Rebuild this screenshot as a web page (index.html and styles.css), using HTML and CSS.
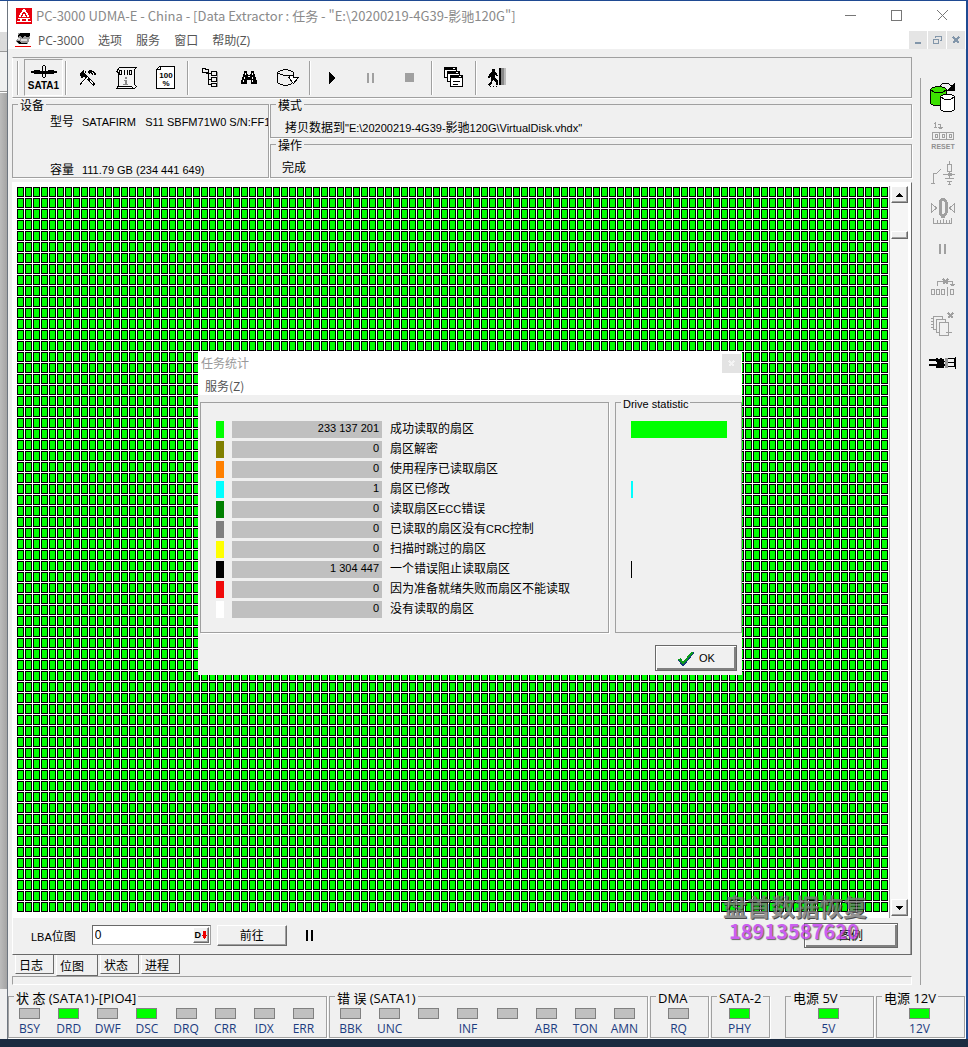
FILE: index.html
```html
<!DOCTYPE html>
<html lang="zh-CN">
<head>
<meta charset="utf-8">
<title>PC-3000 UDMA-E - China</title>
<link rel="stylesheet" href="styles.css">
</head>

<body>
<div class="desktop">
	<div class="behind">
		<div class="behind-title"></div>
		<div class="behind-menu"></div>
		<div class="behind-tool"></div>
		<div class="behind-body"></div>
		<div class="behind-foot"></div>
	</div>

	<div class="window">
		<!--标题栏-->
		<div class="titlebar">
			<svg class="logo" width="16" height="16" viewBox="0 0 16 16"><path fill="#e8000d" d="M0 0h16v16H0z"/><path fill="#fff" d="M7 1h2v1h1v2h1v1h1v2h1v2h-2V7h-1V5H9V4H7v1H6v2H5v2H3V7h1V5h1V4h1V2h1zM7 6h2v2h1v1H6V8h1zM2 10h12v1H2zM4 11h2v2H4zM10 11h2v2h-2zM1 13h14v1H1z"/></svg>
			<span class="title">PC-3000 UDMA-E - China - [Data Extractor : 任务 - "E:\20200219-4G39-影驰120G"]</span>
			<button class="win-btn" aria-label="最小化"><svg width="12" height="12"><path d="M0 5.500h11"/></svg></button>
			<button class="win-btn" aria-label="最大化"><svg width="12" height="12"><path d="M.5.5h10v10H.5z"/></svg></button>
			<button class="win-btn" aria-label="关闭"><svg width="12" height="12"><path d="M.5.5l10 10M10.500.5l-10 10"/></svg></button>
		</div>

		<!--菜单-->
		<div class="menubar">
			<svg class="menu-icon" width="16" height="16" viewBox="0 0 16 16"><path fill="#999" d="M3 1h12v5l-2 6H3L1 9l2-3z"/><path d="M5 1h10v3l-3 1-2-1-3 2-2-2-2 1V3zM2 9h2l3 2h5v1H4z"/><path fill="#ddd" d="M6 7h6v2H6zM3 6h2v2H3z"/><path fill="#e00" d="M0 14h16v1H0z"/></svg>
			<a href="#">PC-3000</a>
			<a href="#">选项</a>
			<a href="#">服务</a>
			<a href="#">窗口</a>
			<a href="#">帮助(Z)</a>
			<div class="mdi">
				<button aria-label="最小化子窗口"><svg width="10" height="10"><path fill="#8296aa" d="M2 7h6v2H2z"/></svg></button>
				<button aria-label="还原子窗口"><svg width="10" height="10"><path fill="none" stroke="#8296aa" d="M3 3V1.500h6.500v4H8M1.500 4.500h5v4h-5zM1 4h6M3 1h7"/></svg></button>
				<button aria-label="关闭子窗口"><svg width="10" height="10"><path fill="none" stroke="#8296aa" stroke-width="2" d="M2 2l6 6M8 2 2 8"/></svg></button>
			</div>
		</div>

		<div class="body">
			<div class="main">
				<!--工具栏-->
				<div class="toolbar">
					<i class="grip"></i>
					<button class="tool sata">
						<svg width="26" height="13" viewBox="0 0 26 13"><path d="M0 6h26v2H0zM3 5h6v4H3zM17 5h6v4h-6zM9 6h8v3H9z"/><path d="M11 1h1v11h-1zM14 1h1v11h-1zM12 0h2v1h-2zM12 12h2v1h-2z"/></svg>
						<b>SATA1</b>
					</button>
					<i class="sep"></i>
					<button class="tool" aria-label="工具"><svg width="18" height="18" viewBox="0 0 18 18"><path d="M9 2l2-1 3 1 3 3-1 2-2-2-1 1-2-2-9 12-2-1L10 5z"/><path d="M1 4l3-3 4 2-2 1 1 2 9 9-2 2-9-9-3 1z"/><path fill="#fff" d="M4 3l1-1 1 1-1 1zM8 8l1 1-5 6-1-1zM11 11l3 3-1 1-3-3zM13 3l2 1-1 1z"/></svg></button>
					<button class="tool" aria-label="脚本"><svg width="24" height="24" viewBox="0 0 24 24"><path fill="#f4f4f4" stroke="#000" d="M4.500 1.500h17l-2 2v15l2 2-2 2H1.500l2-3V6.500l-2-1z"/><path fill="none" stroke="#000" d="M4.500 4.500h2v4h-2zM9.500 4v5M12.500 4v5M14.500 4.500h2v4h-2zM2 20.500h14l2 1"/><path fill="#888" d="M10 11h2v2h-2zM9 14h3v4h1v1H8v-1h2v-3H9z"/></svg></button>
					<button class="tool" aria-label="百分比"><svg width="20" height="24" viewBox="0 0 20 24"><path fill="#fff" stroke="#000" d="M3.500.5h15v22H.5v-19z"/><path d="M1 3h3V0h1v4H1z"/><text x="10" y="12" font-size="8">100</text><text x="10" y="20" font-size="8">%</text></svg></button>
					<i class="sep"></i>
					<button class="tool" aria-label="目录树"><svg width="18" height="20" viewBox="0 0 18 20"><path fill="none" stroke="#000" d="M1.500 2V.5h3v1h3v3h-6zM5 5.500h5M7.500 5v11.500h3M7.500 11.500h3M10.500 3.500h5v4h-5zM10.500 9.500h5v4h-5zM10.500 15.500h5v3h-5z"/><path fill="#999" d="M16 4h1v15h-1z"/></svg></button>
					<button class="tool" aria-label="查找"><svg width="18" height="16" viewBox="0 0 18 16"><path d="M4 1h3v3h1v1h2V4h1V1h3v3h1v3h1v3h1v4h-6v-4H7v4H1v-4h1V7h1V4h1z"/><path fill="#fff" d="M5 3h1v2H5zM4 7h1v2H4zM3 10h1v2H3zM12 3h1v2h-1zM12 7h1v2h-1zM12 10h1v2h-1zM8 6h2v1H8z"/></svg></button>
					<button class="tool" aria-label="磁盘"><svg width="24" height="18" viewBox="0 0 24 18"><path fill="none" stroke="#000" d="M17.500 6V3.500l-3-2-5-1-5 1-3 2v10l3 2 5 1 5-1 2-2M1.500 3.500l3 2 5 1h4"/><path fill="#fff" stroke="#000" d="M13.500 6.500h4v2h5l-5 6-5-6h1z"/></svg></button>
					<i class="sep"></i>
					<button class="tool" aria-label="开始"><svg width="8" height="12"><path d="M1 0l6 6-6 6z"/></svg></button>
					<button class="tool" aria-label="暂停"><svg width="8" height="12"><path fill="#a0a0a0" d="M0 1h2v10H0zM5 1h2v10H5z"/></svg></button>
					<button class="tool" aria-label="停止"><svg width="10" height="10"><path fill="#a0a0a0" d="M0 0h9v9H0z"/></svg></button>
					<i class="sep"></i>
					<button class="tool" aria-label="窗口列表"><svg width="20" height="22" viewBox="0 0 20 22"><g fill="#fff" stroke="#000"><path d="M.5 1.500h12v9H.5z"/><path d="M3.500 5.500h12v9h-12z"/><path d="M6.500 9.500h12v10h-12z"/></g><path d="M0 0h13v3H0zM3 4h13v3H3zM6 8h13v3H6zM9 14h7v1H9zM9 17h5v1H9z"/><path fill="#fff" d="M9 1h2v1H9zM12 5h2v1h-2zM15 9h2v1h-2z"/></svg></button>
					<i class="sep"></i>
					<button class="tool" aria-label="退出"><svg width="20" height="20" viewBox="0 0 20 20"><path d="M4 1h3v3h1l2 4H8L7 7v3l3 3v4H8v-3l-3-2-1 3-2 3-2-1 3-4V8L2 10H0l1-4 3-2zM2 18h1v1H2zM5 18h1v1H5zM8 18h1v1H8z"/><path d="M11 0h2v17h-2z"/><path fill="#888" d="M13 0h3v17h-3z"/><path fill="#bbb" d="M16 0h2v17h-2z"/></svg></button>
				</div>

				<!--任务信息-->
				<div class="info">
					<fieldset class="group device">
						<legend>设备</legend>
						<dl>
							<dt>型号</dt>
							<dd>SATAFIRM &nbsp; S11 SBFM71W0 S/N:FF1</dd>
							<dt>容量</dt>
							<dd>111.79 GB (234 441 649)</dd>
						</dl>
					</fieldset>
					<div class="info-right">
						<fieldset class="group">
							<legend>模式</legend>
							<p class="mode">拷贝数据到<span class="en">"E:\20200219-4G39-</span>影驰<span class="en">120G\VirtualDisk.vhdx"</span></p>
						</fieldset>
						<fieldset class="group">
							<legend>操作</legend>
							<p class="action">完成</p>
						</fieldset>
					</div>
				</div>

				<!--位图-->
				<div class="panel">
					<div class="view">
						<div class="sectors"></div>
						<div class="scrollbar">
							<button class="raised" aria-label="向上"><svg width="8" height="4"><path d="M3 0h1v1h1v1h1v1h1v1H0V3h1V2h1V1h1z"/></svg></button>
							<div class="thumb raised"></div>
							<button class="raised down" aria-label="向下"><svg width="8" height="4"><path d="M0 0h7v1H6v1H5v1H4v1H3V3H2V2H1V1H0z"/></svg></button>
						</div>
					</div>
					<div class="lba">
						<label for="lba"><span class="en">LBA</span>位图</label>
						<div class="lba-box">
							<input type="text" id="lba" value="0">
							<button class="raised" aria-label="十进制"><b>D</b><svg width="5" height="8"><path fill="#e00" d="M1 0h3v4h1v1H4v2H3v1H2V7H1V5H0V4h1z"/></svg></button>
						</div>
						<button class="raised go">前往</button>
						<svg class="hold" width="7" height="11"><path d="M0 0h2v11H0zM5 0h2v11H5z"/></svg>
						<button class="raised default legend-btn">图例</button>
					</div>
					<div class="watermark">
						<p class="wm-name">盘首数据恢复</p>
						<p class="wm-tel">18913587620</p>
					</div>
				</div>

				<div class="tabs">
					<button>日志</button>
					<button class="current">位图</button>
					<button>状态</button>
					<button>进程</button>
				</div>
				<div class="progress"></div>

				<!--任务统计对话框-->
				<div class="dialog">
					<div class="dialog-title">任务统计<button aria-label="关闭"><svg width="7" height="7"><path stroke="#f4f4f4" stroke-width="2" d="M1 1l5 5M6 1 1 6"/></svg></button></div>
					<div class="dialog-menu"><a href="#">服务(Z)</a></div>
					<div class="dialog-body">
						<div class="stats">
							<table>
								<tr><td class="lime"></td><td class="num">233 137 201</td><td>成功读取的扇区</td></tr>
								<tr><td class="olive"></td><td class="num">0</td><td>扇区解密</td></tr>
								<tr><td class="orange"></td><td class="num">0</td><td>使用程序已读取扇区</td></tr>
								<tr><td class="cyan"></td><td class="num">1</td><td>扇区已修改</td></tr>
								<tr><td class="green"></td><td class="num">0</td><td>读取扇区<span class="en">ECC</span>错误</td></tr>
								<tr><td class="gray"></td><td class="num">0</td><td>已读取的扇区没有<span class="en">CRC</span>控制</td></tr>
								<tr><td class="yellow"></td><td class="num">0</td><td>扫描时跳过的扇区</td></tr>
								<tr><td class="black"></td><td class="num">1 304 447</td><td>一个错误阻止读取扇区</td></tr>
								<tr><td class="red"></td><td class="num">0</td><td>因为准备就绪失败而扇区不能读取</td></tr>
								<tr><td class="white"></td><td class="num">0</td><td>没有读取的扇区</td></tr>
							</table>
						</div>
						<fieldset class="group drive">
							<legend>Drive statistic</legend>
							<ul>
								<li class="lime" style="width:96px"></li>
								<li></li>
								<li></li>
								<li class="cyan" style="width:2px"></li>
								<li></li>
								<li></li>
								<li></li>
								<li class="black" style="width:1px"></li>
								<li></li>
								<li></li>
							</ul>
						</fieldset>
					</div>
					<div class="dialog-foot">
						<button class="raised default ok"><svg width="18" height="15" viewBox="0 0 18 15"><path fill="#123a7a" d="M1 9l3-1 2 3 9-10h2v1L7 15H5z"/><path fill="#0a9a1a" d="M1 8l3-1 2 4 9-11 1 2L6 14z"/></svg>OK</button>
					</div>
				</div>
			</div>

			<!--右侧工具-->
			<div class="side">
				<button aria-label="复制数据"><svg width="28" height="30" viewBox="0 0 28 30"><path fill="#3ce000" stroke="#000" d="M1.500 7.500l2-2 6-1 6 1 2 2v14l-3 2h-10l-3-2z"/><path fill="none" stroke="#000" d="M2 8l3 2h9l3-2M11 3.500l3-2h5l3 2 2 2"/><path d="M26 0v9h-8z"/><path fill="#fff" stroke="#000" d="M11.500 14.500l3-2h8l3 2v13l-3 2h-8l-3-2z"/><path fill="none" stroke="#000" d="M12 15l3 2h7l3-2"/></svg></button>
				<button class="off" aria-label="复位"><svg width="24" height="28" viewBox="0 0 24 28"><path d="M3 2.500h2M4.500 1v5M3 6.500h3M9.500 3v5M7 3.500h3M7 6.500h5M8 7.500h3M1.500 11.500h21v7h-21zM8.500 12v7M15.500 12v7M4 13.500h2v3H4zM11 13.500h2v3h-2zM18 13.500h2v3h-2z"/><text x="12" y="28" font-size="7">RESET</text></svg></button>
				<button class="off" aria-label="电源"><svg width="24" height="26" viewBox="0 0 24 26"><path d="M0 23.500h4M2.500 23V13.500h3M6 13l4-4M18.500 1v3M16.500 4.500h4v7h-4zM18.500 12v6M12 14.500h12M17 13.500h3v2h-3M14 18.500h9M16 21.500h5M18.500 22v3M17 24.500h3"/></svg></button>
				<button class="off" aria-label="归零"><svg width="26" height="28" viewBox="0 0 26 28"><path d="M1.500 6.500v9l5-4.500zM24.500 6.500v9L19.500 11zM3.500 21v5h18v-5M7.500 23v3M10.500 23v3M13.500 22v4M16.500 23v3M19.500 23v3"/><path stroke-width="3" d="M10 5l2-3h2l2 3v11l-2 3h-2l-2-3z"/></svg></button>
				<button class="off" aria-label="暂停"><svg width="8" height="12"><path stroke-width="2" d="M1 1v10M6 1v10"/></svg></button>
				<button class="off" aria-label="跳过"><svg width="26" height="20" viewBox="0 0 26 20"><path d="M1.500 12.500h3v5h-3zM6.500 12.500h3v5h-3zM11.500 12.500h3v5h-3zM20.500 12.500h3v5h-3zM17.500 10v9M7.500 9V4.500h15V8M20 7.500h5M21 8.500h3"/><path stroke-width="2" d="M13 2l5 5M18 2l-5 5"/></svg></button>
				<button class="off" aria-label="副本"><svg width="26" height="26" viewBox="0 0 26 26"><path d="M3.500 4.500h9v13h-9zM1 6.500h2M1 9.500h2M1 12.500h2M1 15.500h2"/><path fill="#f0f0f0" d="M6.500 7.500h9v13h-9z"/><path fill="#f0f0f0" d="M9.500 10.500h9v13h-9z"/><path d="M16 20.500h6M18 19.500v3"/><path stroke-width="2" d="M18 1l5 5M23 1l-5 5"/></svg></button>
				<button aria-label="连接"><svg width="28" height="14" viewBox="0 0 28 14"><path d="M0 3h7V2h2v1h2V2h2v1h2v2h1v1h-1v2h4v2h-4v2H7v-2H0V8h8V6H7V5H0z"/><path fill="#999" d="M16 2h3v10h-3z"/><path d="M19 2h7V1h1v12h-1v-2h-7v-1h6V7h-6V6h6V3h-6z"/></svg></button>
			</div>
		</div>

		<!--状态指示灯-->
		<div class="status">
			<fieldset class="group">
				<legend>状 态 (SATA1)-[PIO4]</legend>
				<ul>
					<li><i></i>BSY</li>
					<li><i class="on"></i>DRD</li>
					<li><i></i>DWF</li>
					<li><i class="on"></i>DSC</li>
					<li><i></i>DRQ</li>
					<li><i></i>CRR</li>
					<li><i></i>IDX</li>
					<li><i></i>ERR</li>
				</ul>
			</fieldset>
			<fieldset class="group">
				<legend>错 误 (SATA1)</legend>
				<ul>
					<li><i></i>BBK</li>
					<li><i></i>UNC</li>
					<li><i></i></li>
					<li><i></i>INF</li>
					<li><i></i></li>
					<li><i></i>ABR</li>
					<li><i></i>TON</li>
					<li><i></i>AMN</li>
				</ul>
			</fieldset>
			<fieldset class="group">
				<legend>DMA</legend>
				<ul><li><i></i>RQ</li></ul>
			</fieldset>
			<fieldset class="group">
				<legend>SATA-2</legend>
				<ul><li><i class="on"></i>PHY</li></ul>
			</fieldset>
			<fieldset class="group power">
				<legend>电源 5V</legend>
				<ul><li><i class="on"></i>5V</li></ul>
			</fieldset>
			<fieldset class="group">
				<legend>电源 12V</legend>
				<ul><li><i class="on"></i>12V</li></ul>
			</fieldset>
		</div>
	</div>
</div>
</body>
</html>
```
FILE: styles.css
```css
* {
	box-sizing:border-box;
}
body {
	margin:0;
	background:#1b2b40;
	font-family:"Liberation Sans", "Noto Sans CJK SC", sans-serif;
	font-size:12px;
	color:#000;
}
ul, dl, dd, p {
	list-style:none;
	margin:0;
	padding:0;
}
a {
	color:inherit;
	text-decoration:none;
}
button {
	margin:0;
	padding:0;
	border:0;
	background:none;
	font:inherit;
	color:inherit;
	display:flex;
	align-items:center;
	justify-content:center;
}
svg {
	display:block;
	flex:none;
	shape-rendering:crispEdges;
}
svg text {
	font-weight:bold;
	text-anchor:middle;
}
.en {
	font-size:11px;
}
.desktop {
	display:flex;
	padding:1px 2px 0 0;
	background:#1f4a92;
	border-bottom:8px solid #1b2b40;
}

/* 后面的窗口 */
.behind {
	width:7px;
	display:flex;
	flex-direction:column;
}
.behind-title {
	height:31px;
	background:#fff;
}
.behind-menu {
	height:20px;
	background:#dcdcdc;
	border-bottom:1px solid #999;
}
.behind-tool {
	height:40px;
	background:#f0f0f0;
	border-bottom:1px solid #999;
}
.behind-body {
	flex:1;
	background:linear-gradient(90deg, #bcbcbc, #a4a4a4);
	border-top:1px solid #fff;
}
.behind-foot {
	height:50px;
	background:#f0f0f0;
}

/* 主窗口 */
.window {
	flex:1;
	min-width:0;
	background:#f0f0f0;
	border-left:1px solid #6e7680;
}
.titlebar {
	height:30px;
	padding-left:8px;
	display:flex;
	align-items:center;
	background:#fff;
	color:#8a8a8a;
	font-family:"Noto Sans CJK SC", sans-serif;
	font-size:13px;
}
.title {
	flex:1;
	margin-left:4px;
	padding-bottom:2px;
	white-space:nowrap;
	overflow:hidden;
}
.win-btn {
	width:46px;
	height:30px;
}
.win-btn path {
	fill:none;
	stroke:#777;
}
.menubar {
	height:18px;
	padding-left:7px;
	display:flex;
	align-items:center;
	background:#fff;
	color:#555;
	font-family:"Open Sans", "Noto Sans CJK SC", sans-serif;
}
.menubar a {
	margin-right:14px;
	line-height:18px;
	padding-top:1px;
}
.menu-icon {
	margin-right:7px;
}
.mdi {
	display:flex;
	gap:1px;
	margin-left:auto;
	margin-right:1px;
}
.mdi button {
	width:18px;
	height:18px;
	background:#e5e5e5;
}
.body {
	display:flex;
}
.main {
	flex:1;
	min-width:0;
	position:relative;
	padding:8px 0 0 4px;
}

/* 工具栏 */
.toolbar {
	height:41px;
	display:flex;
	align-items:center;
	border:1px solid #a0a0a0;
	border-left-color:#fff;
	box-shadow:0 1px 0 #fff;
}
.grip {
	width:2px;
	height:34px;
	margin:0 5px 0 4px;
	background:#a0a0a0;
	border-right:1px solid #fff;
}
.sep {
	width:2px;
	height:34px;
	margin:0 1px 0 2px;
	background:#a0a0a0;
	border-right:1px solid #fff;
}
.tool {
	width:39px;
	height:37px;
}
.sata {
	flex-direction:column;
	gap:3px;
	border:1px solid #fff;
	border-top-color:#a0a0a0;
	border-left-color:#a0a0a0;
	font-size:10px;
	line-height:10px;
}

/* 分组框 */
.group {
	min-width:0;
	margin:0;
	padding:0;
	border:1px solid #a0a0a0;
	box-shadow:1px 1px 0 #fff;
}
.group legend {
	margin-left:5px;
	padding:4px 2px 0;
	height:17px;
	line-height:13px;
	white-space:nowrap;
}
.info {
	display:flex;
	gap:1px;
	margin-top:-2px;
}
.device {
	width:257px;
	overflow:hidden;
}
.device dl {
	display:grid;
	grid-template-columns:24px 1fr;
	column-gap:8px;
	row-gap:30px;
	height:64px;
	padding-left:37px;
	line-height:18px;
}
.device dd {
	font-size:11px;
	white-space:nowrap;
}
.info-right {
	flex:1;
	min-width:0;
}
.info-right .group {
	height:42px;
}
.info-right .group + .group {
	margin-top:-2px;
}
.info-right p {
	padding-top:7px;
	line-height:16px;
}
.info-right .mode {
	padding-left:14px;
}
.info-right .action {
	padding-left:11px;
}

/* 位图面板 */
.panel {
	position:relative;
	margin-top:4px;
	border:1px solid #fff;
	border-right-color:#696969;
	border-bottom-color:#696969;
}
.view {
	display:flex;
	padding:4px 3px 5px 4px;
	background:#fff;
}
.sectors {
	flex:1;
	height:726px;
	background:
		repeating-linear-gradient(90deg, transparent 0 7px, #fff 7px 8px),
		repeating-linear-gradient(180deg, transparent 0 10px, #fff 10px 11px),
		repeating-linear-gradient(90deg, #000 0 1px, transparent 1px 6px, #000 6px 8px),
		repeating-linear-gradient(180deg, #000 0 1px, transparent 1px 9px, #000 9px 11px),
		#0f0;
}
.scrollbar {
	width:19px;
	display:flex;
	flex-direction:column;
	margin:-1px 0 -5px 0;
	padding:0 0 2px 1px;
	border-left:1px solid #a0a0a0;
	background:#f5f5f5;
}
.raised {
	background:#f0f0f0;
	border:1px solid #fff;
	border-right-color:#696969;
	border-bottom-color:#696969;
	box-shadow:inset -1px -1px 0 #a0a0a0;
}
.scrollbar button {
	height:17px;
}
.thumb {
	height:8px;
	margin-top:28px;
}
.scrollbar .down {
	margin-top:auto;
}
.lba {
	display:flex;
	align-items:center;
	height:36px;
	padding:0 12px 2px 18px;
	border-right:1px solid #a0a0a0;
}
.lba-box {
	display:flex;
	width:119px;
	height:20px;
	margin:0 6px 0 16px;
	padding:1px;
	background:#fff;
	border:1px solid #a0a0a0;
	border-top-color:#696969;
	border-left-color:#696969;
}
.lba-box input {
	flex:1;
	min-width:0;
	padding:0 1px;
	border:0;
	outline:0;
	background:none;
	font:12px "Liberation Sans", sans-serif;
}
.lba-box button {
	width:16px;
	gap:1px;
	font-size:9px;
}
.go {
	width:70px;
	height:21px;
}
.go, .legend-btn {
	padding-bottom:2px;
}
.hold {
	margin-left:19px;
}
.default {
	border-color:#696969;
	box-shadow:inset 1px 1px 0 #fff, inset -2px -2px 0 #808080;
}
.legend-btn {
	width:94px;
	height:25px;
	margin-left:auto;
}
.watermark {
	position:absolute;
	right:44px;
	bottom:12px;
	opacity:.8;
	font-family:"Noto Sans CJK SC", sans-serif;
	font-weight:bold;
}
.wm-name {
	color:#777;
	font-size:24px;
	line-height:28px;
	text-shadow:1px 1px 0 #222;
}
.wm-tel {
	padding-left:6px;
	color:#c33cf0;
	font-size:20px;
	line-height:22px;
	text-shadow:1px 1px 1px #444;
}

/* 页签 */
.tabs {
	display:flex;
	align-items:flex-start;
	gap:2px;
	padding-left:3px;
	height:21px;
}
.tabs button {
	width:39px;
	height:19px;
	padding-left:3px;
	justify-content:flex-start;
	border:1px solid #696969;
	border-top:0;
	border-left-color:#fff;
}
.tabs .current {
	width:42px;
	height:21px;
}
.progress {
	height:9px;
	border:1px solid #fff;
	border-top-color:#a0a0a0;
	border-left-color:#a0a0a0;
}

/* 对话框 */
.dialog {
	position:absolute;
	left:190px;
	top:302px;
	width:544px;
	background:#f0f0f0;
}
.dialog-title {
	display:flex;
	justify-content:space-between;
	height:22px;
	padding:3px 1px 0 3px;
	background:#fff;
	color:#999;
	font-family:"Noto Sans CJK SC", sans-serif;
	line-height:18px;
}
.dialog-title button {
	width:19px;
	height:19px;
	background:#e3e3e3;
}
.dialog-menu {
	height:22px;
	padding-left:7px;
	background:#fff;
	color:#555;
	font-family:"Noto Sans CJK SC", sans-serif;
	line-height:26px;
}
.dialog-body {
	display:flex;
	gap:6px;
	padding-left:2px;
}
.stats {
	width:409px;
	margin-top:7px;
	padding:15px 0 11px 7px;
	border:1px solid #a0a0a0;
	box-shadow:1px 1px 0 #fff;
}
.stats table {
	border-spacing:8px 3px;
}
.stats td {
	height:17px;
	padding:0;
	line-height:17px;
	vertical-align:top;
	white-space:nowrap;
}
.stats td:first-child {
	width:8px;
}
.stats .num {
	width:150px;
	padding-right:3px;
	background:#c0c0c0;
	font-size:11px;
	line-height:15px;
	text-align:right;
}
.lime { background:#0f0; }
.olive { background:#808000; }
.orange { background:#ff8000; }
.cyan { background:#0ff; }
.green { background:#008000; }
.gray { background:#808080; }
.yellow { background:#ff0; }
.black { background:#000; }
.red { background:#f00a0a; }
.white { background:#fff; }
.drive {
	flex:1;
	margin-top:-1px;
	box-shadow:none;
}
.drive legend {
	font-size:11px;
}
.drive ul {
	padding:10px 0 0 15px;
}
.drive li {
	height:17px;
	margin-bottom:3px;
}
.dialog-foot {
	display:flex;
	justify-content:flex-end;
	padding:12px 5px 4px 0;
}
.ok {
	width:82px;
	height:26px;
	gap:4px;
	font-size:11px;
}

/* 右侧工具 */
.side {
	width:46px;
	margin:29px 0 0 8px;
	border-left:1px solid #a0a0a0;
}
.side button {
	width:44px;
	height:38px;
}
.off svg {
	fill:none;
	stroke:#a0a0a0;
}
.off text {
	fill:#909090;
	stroke:none;
}

/* 指示灯 */
.status {
	display:grid;
	grid-template-columns:319fr 319fr 59fr 59fr 102fr 89fr;
	gap:2px;
	padding:3px 1px 1px 0;
	color:#1c3c80;
	font-family:"Open Sans", "Noto Sans CJK SC", sans-serif;
}
.status legend {
	color:#000;
	font-size:13px;
}
.status ul {
	display:flex;
	padding:3px 3px 0 1px;
	line-height:18px;
}
.status li {
	flex:1;
	height:29px;
	text-align:center;
}
.status i {
	display:block;
	width:21px;
	height:11px;
	margin:0 auto 1px;
	background:#c0c0c0;
	border:1px solid #808080;
}
.status .on {
	background:#0f0;
}
.power {
	margin-left:13px;
}
```
